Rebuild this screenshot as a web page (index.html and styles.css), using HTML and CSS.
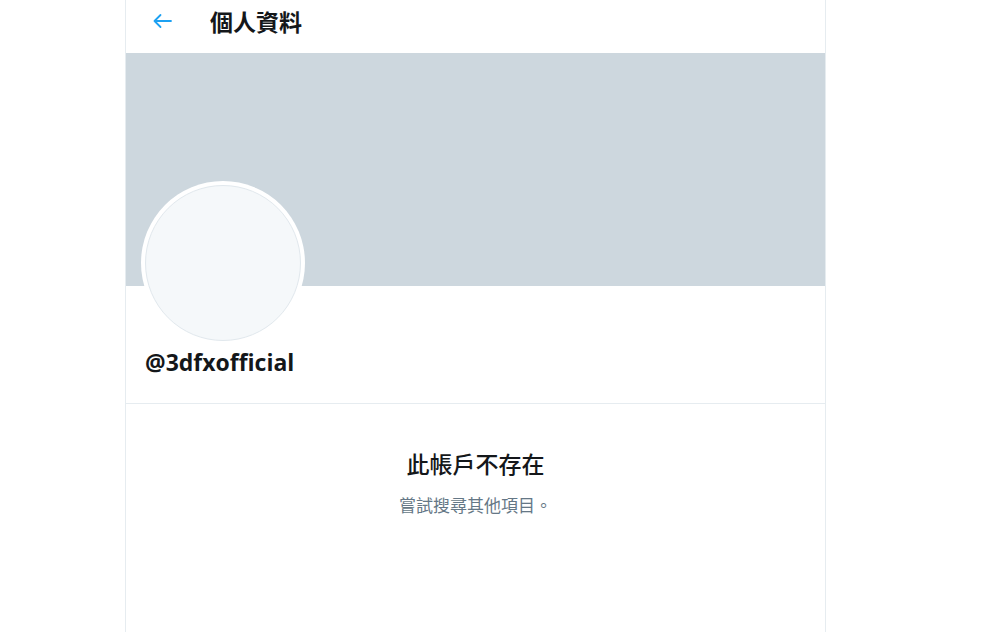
FILE: index.html
```html
<!DOCTYPE html>
<html lang="zh-Hant">
<head>
<meta charset="utf-8">
<title>個人資料</title>
<link rel="stylesheet" href="styles.css">
</head>
<body>
<main class="column">
  <header class="topbar">
    <span class="back">
      <svg width="20" height="16" viewBox="0 0 20 16" aria-hidden="true"><path d="M19 8H2.5M8.5 2L2.5 8l6 6" fill="none" stroke="#1da1f2" stroke-width="1.8" stroke-linecap="round" stroke-linejoin="round"/></svg>
    </span>
    <h1 class="title">個人資料</h1>
  </header>
  <div class="banner"></div>
  <section class="profile">
    <div class="avatar"><div class="avatar-inner"></div></div>
    <div class="handle">@3dfxofficial</div>
  </section>
  <section class="empty">
    <div class="empty-title">此帳戶不存在</div>
    <div class="empty-sub">嘗試搜尋其他項目。</div>
  </section>
</main>
</body>
</html>
```
FILE: styles.css
```css
html, body {
  margin: 0;
  padding: 0;
  background: #fff;
}
body {
  font-family: "Noto Sans CJK TC", "Noto Sans", sans-serif;
  color: #14171a;
}
.column {
  margin-left: 125px;
  width: 699px;
  min-height: 632px;
  border-left: 1px solid #e6ecf0;
  border-right: 1px solid #e6ecf0;
  display: flex;
  flex-direction: column;
}
.topbar {
  height: 53px;
  display: flex;
  align-items: center;
  padding-left: 26px;
  box-sizing: border-box;
}
.back {
  width: 20px;
  height: 16px;
  display: flex;
  margin-top: -11px;
}
.title {
  margin: -10px 0 0 38px;
  font-size: 23px;
  font-weight: 700;
  line-height: 1;
  color: #14171a;
  font-family: "Noto Sans CJK TC", sans-serif;
}
.banner {
  height: 233px;
  background: #cdd7de;
}
.profile {
  padding: 0 15px;
  height: 117px;
  border-bottom: 1px solid #e6ecf0;
}
.avatar {
  width: 164px;
  height: 164px;
  margin-top: -105px;
  border-radius: 50%;
  background: #fff;
  padding: 4px;
  box-sizing: border-box;
}
.avatar-inner {
  width: 100%;
  height: 100%;
  border-radius: 50%;
  background: #f5f8fa;
  border: 1px solid #e1e8ed;
  box-sizing: border-box;
}
.handle {
  margin: 3px 0 0 4px;
  font-family: "Open Sans", "DejaVu Sans", sans-serif;
  font-weight: 700;
  font-size: 23px;
  line-height: 28px;
  color: #14171a;
}
.empty {
  display: flex;
  flex-direction: column;
  align-items: center;
  padding-top: 45px;
}
.empty-title {
  font-size: 23px;
  line-height: 28px;
  font-weight: 500;
  color: #14171a;
}
.empty-sub {
  margin-top: 17px;
  font-size: 17px;
  line-height: 22px;
  color: #657786;
}
```
